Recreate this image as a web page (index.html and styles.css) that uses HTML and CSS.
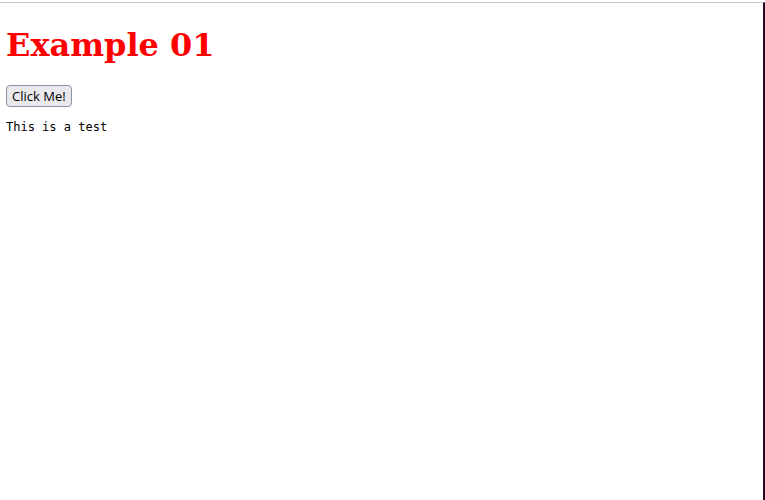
FILE: index.html
```html
<!DOCTYPE html>
<html>
<head>
<meta charset="utf-8">
<link rel="stylesheet" href="styles.css">
</head>
<body>
<div class="frame">
  <div class="content">
    <h1 class="title">Example 01</h1>
    <button class="btn">Click Me!</button>
    <p class="text">This is a test</p>
  </div>
</div>
</body>
</html>
```
FILE: styles.css
```css
html, body {
  margin: 0;
  padding: 0;
  background: #fff;
}
.frame {
  margin-top: 2px;
  border-top: 1px solid #c8c8c8;
  border-right: 2px solid #2a0a1e;
  width: 765px;
  height: 498px;
  box-sizing: border-box;
  overflow: hidden;
}
.content {
  padding: 0 6px;
}
.title {
  font-family: "DejaVu Serif", serif;
  font-weight: bold;
  font-size: 32px;
  color: #ff0000;
  margin: 23px 0 21px;
}
.btn {
  font-family: "Open Sans", "Noto Sans", sans-serif;
  font-size: 13px;
  padding: 1px 5px;
  border: 1px solid #8f8f9d;
  border-radius: 4px;
  background: #e9e9ed;
  color: #000;
}
.text {
  font-family: "DejaVu Sans Mono", monospace;
  font-size: 12px;
  margin: 13px 0;
}
```
